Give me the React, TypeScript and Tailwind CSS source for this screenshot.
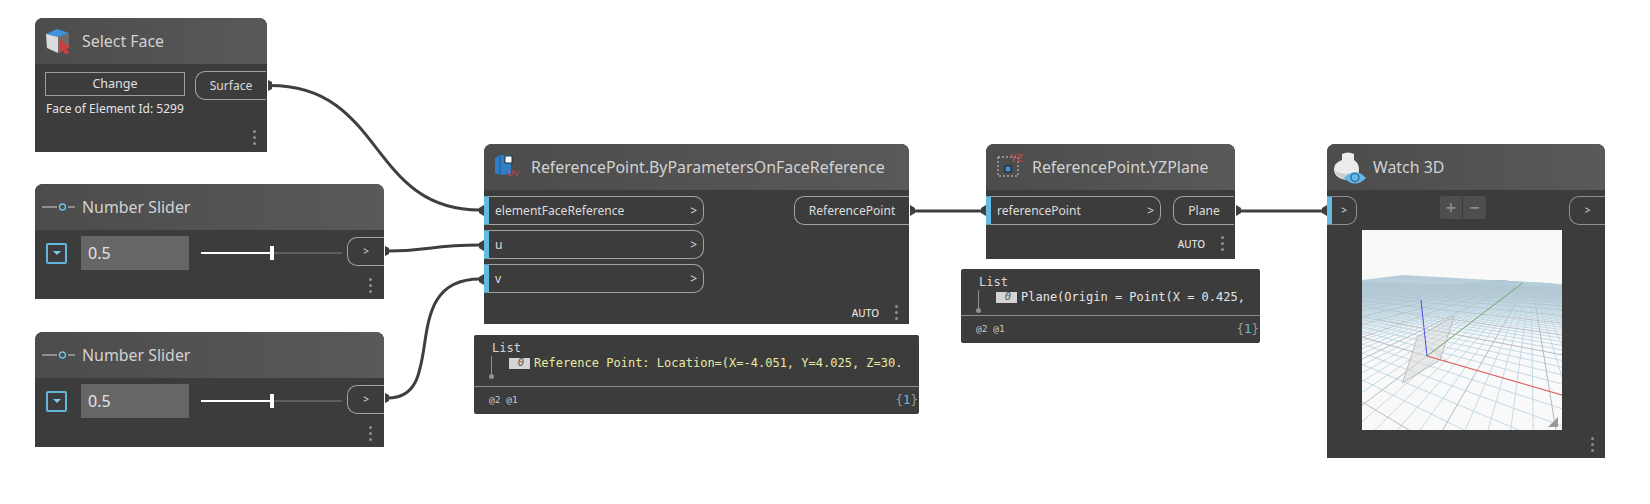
import type { ReactNode } from "react";

const ui = "font-['Noto_Sans','Open_Sans',sans-serif]";
const mono = "font-['DejaVu_Sans_Mono','Liberation_Mono',monospace]";

// ground grid of the Watch 3D preview, projected by hand
const vpX = [-208, 47];
const vpY = [169, 47];
const origin = [65, 126];
const p = -0.031;
const q = 0.075;

function project(x: number, y: number) {
  const d = 1 + x * p + y * q;
  return [
    (origin[0] + x * p * vpX[0] + y * q * vpY[0]) / d,
    (origin[1] + x * p * vpX[1] + y * q * vpY[1]) / d,
  ];
}

function gridLines() {
  const lines: { k: string; a: number[]; b: number[]; major: boolean }[] = [];
  for (let i = -60; i <= 30; i++) {
    const start = (0.03 - 1 - i * p) / q;
    lines.push({ k: `x${i}`, a: project(i, start), b: project(i, 800), major: i % 5 === 0 });
  }
  for (let i = -13; i <= 100; i++) {
    const end = (1 + i * q - 0.03) / -p;
    lines.push({ k: `y${i}`, a: project(end, i), b: project(-800, i), major: i % 5 === 0 });
  }
  return lines;
}

function Dots({ className = "" }: { className?: string }) {
  return (
    <div className={`flex flex-col gap-[3px] ${className}`}>
      <span className="h-[3px] w-[3px] rounded-full bg-[#8f8f8f]" />
      <span className="h-[3px] w-[3px] rounded-full bg-[#8f8f8f]" />
      <span className="h-[3px] w-[3px] rounded-full bg-[#8f8f8f]" />
    </div>
  );
}

function Node({
  className,
  title,
  icon,
  children,
}: {
  className: string;
  title: string;
  icon: ReactNode;
  children: ReactNode;
}) {
  return (
    <div className={`absolute flex flex-col bg-[#3c3c3c] rounded-t-[8px] ${className}`}>
      <div className="flex h-[46px] shrink-0 items-center rounded-t-[8px] bg-gradient-to-r from-[#4c4c4c] to-[#595959]">
        {icon}
        <span className="pt-px text-[15.9px] leading-none text-[#d2d2d2] whitespace-nowrap">{title}</span>
      </div>
      {children}
    </div>
  );
}

function InPort({ label, className = "w-[220px]" }: { label: string; className?: string }) {
  return (
    <div className={`flex h-[29px] items-center justify-between rounded-r-[10px] border border-l-[5px] border-[#a3a3a3] border-l-[#62bbe0] pl-[6px] pr-[6px] text-[12.1px] text-[#dcdcdc] ${className}`}>
      <span className="pt-px leading-none">{label}</span>
      <span className="text-[12px] leading-none">&gt;</span>
    </div>
  );
}

function OutPort({ label, className = "" }: { label: string; className?: string }) {
  return (
    <div className={`flex h-[29px] items-center justify-center rounded-l-[10px] border border-r-0 border-[#a3a3a3] pt-px text-[12.1px] leading-none text-[#dcdcdc] ${className}`}>
      {label}
    </div>
  );
}

function SliderNode({ className }: { className: string }) {
  return (
    <Node
      className={className}
      title="Number Slider"
      icon={
        <svg width="34" height="12" viewBox="0 0 34 12" className="ml-[7px] mr-[6px] shrink-0">
          <path d="M0 6H15M26 6H33" stroke="#d0d0d0" strokeWidth="1" />
          <circle cx="20.5" cy="6" r="3" fill="none" stroke="#6ac0e7" strokeWidth="1.4" />
        </svg>
      }
    >
      <div className="flex h-[34px] mt-[6px] items-center">
        <div className="ml-[11px] flex h-[21px] w-[21px] items-center justify-center rounded-[2px] border-2 border-[#62b5dc]">
          <span className="h-0 w-0 border-x-[4px] border-t-[4px] border-x-transparent border-t-[#7ccbee]" />
        </div>
        <div className="ml-[14px] flex h-[34px] w-[108px] items-center bg-[#666666] pl-[7px] text-[16px] text-[#e4e4e4]">0.5</div>
        <div className="relative ml-[12px] h-[2px] w-[141px] bg-[#5f5f5f]">
          <div className="h-[2px] w-[71px] bg-white" />
          <div className="absolute left-[69px] top-[-6px] h-[14px] w-[4px] bg-white" />
        </div>
        <div className="ml-[5px] flex h-[29px] w-[37px] -translate-y-[2px] items-center justify-center rounded-l-[10px] border border-r-0 border-[#a3a3a3] text-[10px] text-[#dcdcdc]">&gt;</div>
      </div>
      <Dots className="ml-auto mr-[12px] mt-[8px]" />
    </Node>
  );
}

function Preview({
  className,
  text,
  textClass,
  top,
}: {
  className: string;
  text: string;
  textClass: string;
  top: string;
}) {
  return (
    <div className={`absolute flex flex-col rounded-[2px] bg-[#3c3c3c] ${mono} ${className}`}>
      <div className={`relative shrink-0 overflow-hidden border-b border-[#8c8c8c] ${top}`}>
        <div className="pl-[18px] pt-[6px] text-[12px] leading-[14px] text-[#d8d8d8]">List</div>
        <div className="absolute left-[17px] top-[21px] h-[20px] w-px bg-[#909090]" />
        <div className="absolute left-[15px] top-[39px] h-[5px] w-[5px] rounded-full bg-[#909090]" />
        <div className="flex items-center pl-[35px] pt-[1px] whitespace-nowrap">
          <span className="flex h-[11px] w-[21px] items-center justify-end bg-[#d4d4d4] pr-[6px] text-[10.5px] italic text-[#555555]">0</span>
          <span className={`ml-[4px] text-[12px] leading-[14px] ${textClass}`}>{text}</span>
        </div>
      </div>
      <div className="flex flex-1 items-center justify-between pl-[15px] pr-px text-[#c8c8c8]">
        <span className="text-[9.5px]">@2 @1</span>
        <span className="text-[12.5px] text-[#9a9a9a]">
          {"{"}
          <span className="text-[#62bbe0]">1</span>
          {"}"}
        </span>
      </div>
    </div>
  );
}

function Wires() {
  const wire = "#3f3f3f";
  return (
    <svg className="absolute inset-0" width="1650" height="504" viewBox="0 0 1650 504" fill="none">
      <g stroke={wire} strokeWidth="3">
        <path d="M270 85.5C385 85.5 368 210 480 210" />
        <path d="M388 251C430 251 430 245 480 245" />
        <path d="M388 398C450 398 395 279 480 279" />
        <path d="M912 211H982" />
        <path d="M1238 211H1323" />
      </g>
      <g fill={wire}>
        <path d="M268 80L272 82V89L268 91Z" />
        <path d="M385 246L389 248V254L385 256Z" />
        <path d="M484 205L479 208V213L484 216Z" />
        <path d="M484 240L479 243V248L484 251Z" />
        <path d="M484 274L479 277V282L484 285Z" />
        <path d="M910 205L915 208V213L910 216Z" />
        <path d="M986 205L981 208V213L986 216Z" />
        <path d="M1236 205L1241 208V213L1236 216Z" />
        <path d="M1327 205L1322 208V213L1327 216Z" />
        <path d="M385 393L389 395V401L385 403Z" />
      </g>
    </svg>
  );
}

function Scene() {
  return (
    <svg width="200" height="200" viewBox="0 0 200 200" className="block">
      <defs>
        <clipPath id="ground">
          <path d="M0 50L41 45L200 54V200H0Z" />
        </clipPath>
        <linearGradient id="haze" x1="0" y1="0" x2="0" y2="1">
          <stop offset="0" stopColor="#b2ccd9" stopOpacity="1" />
          <stop offset="0.2" stopColor="#b2ccd9" stopOpacity="0.8" />
          <stop offset="0.5" stopColor="#bcd5e1" stopOpacity="0.4" />
          <stop offset="1" stopColor="#c4dbe6" stopOpacity="0" />
        </linearGradient>
      </defs>
      <rect width="200" height="200" fill="#f9f9f9" />
      <g clipPath="url(#ground)">
        {gridLines()
          .filter((l) => !l.major)
          .map((l) => (
            <line key={l.k} x1={l.a[0]} y1={l.a[1]} x2={l.b[0]} y2={l.b[1]} stroke="#bcd6e3" strokeWidth="0.9" />
          ))}
        {gridLines()
          .filter((l) => l.major)
          .map((l) => (
            <line key={l.k} x1={l.a[0]} y1={l.a[1]} x2={l.b[0]} y2={l.b[1]} stroke="#aeb4b8" strokeWidth="0.9" />
          ))}
        <rect x="0" y="45" width="200" height="65" fill="url(#haze)" />
      </g>
      <path d="M92.3 86L55.3 107L40.7 152.7L78 130Z" fill="#d8d8d8" fillOpacity="0.5" stroke="#bdbdbd" strokeWidth="1" />
      <path d="M65 126L86 132M68 118L86 132" stroke="#c4c4c4" strokeWidth="0.8" />
      <path d="M65 126L161 52.7" stroke="#6fae6f" strokeWidth="1" />
      <path d="M65 126L200 165" stroke="#f05a5a" strokeWidth="1" />
      <path d="M65 126L59 70" stroke="#4a4ae8" strokeWidth="1" />
      <path d="M186 197L196 187V197Z" fill="#9a9a9a" />
    </svg>
  );
}

export default function App() {
  return (
    <div className={`relative h-[504px] w-[1650px] overflow-hidden bg-white ${ui}`}>
      <Wires />

      {/* Select Face */}
      <Node
        className="left-[35px] top-[18px] h-[134px] w-[232px]"
        title="Select Face"
        icon={
          <svg width="26" height="26" viewBox="0 0 26 26" className="ml-[10px] mr-[11px] shrink-0">
            <path d="M1 6L12 1L24 5L13 9Z" fill="#3f94dc" />
            <path d="M1 6L13 9V25L2 20Z" fill="#dcdcdc" />
            <path d="M13 9L24 5V19L13 25Z" fill="#6e6e6e" />
            <path d="M15 11L26 20L21.5 20.5L24 25L20 26.5L18 22L15 25Z" fill="#c9413f" />
          </svg>
        }
      >
        <div className="flex pl-[10px] pt-[7px]">
          <div className="flex flex-col">
            <div className="mt-px flex h-[24px] w-[140px] items-center justify-center border border-[#9d9d9d] text-[12.5px] text-[#e0e0e0]">Change</div>
            <div className="mt-[5px] pl-px text-[12px] leading-[16px] whitespace-nowrap text-[#e4e4e4]">Face of Element Id: 5299</div>
          </div>
          <OutPort label="Surface" className="ml-[10px] w-[71px]" />
        </div>
        <Dots className="ml-auto mr-[11px] mt-[13px]" />
      </Node>

      <SliderNode className="left-[35px] top-[184px] h-[115px] w-[349px]" />
      <SliderNode className="left-[35px] top-[332px] h-[115px] w-[349px]" />

      {/* ReferencePoint.ByParametersOnFaceReference */}
      <Node
        className="left-[484px] top-[144px] h-[180px] w-[425px]"
        title="ReferencePoint.ByParametersOnFaceReference"
        icon={
          <svg width="26" height="26" viewBox="0 0 26 26" className="ml-[10px] mr-[11px] shrink-0">
            <path d="M1 4L6 1H17V20L6 21L1 19Z" fill="#2f7fc4" />
            <path d="M6 1V21" stroke="#1f5a8f" strokeWidth="1" />
            <rect x="11" y="2" width="7" height="7" fill="#fff" stroke="#2a2a2a" strokeWidth="1" />
            <text x="13" y="22" fontSize="9" fill="#b84a4a" fontFamily="Liberation Sans">UV</text>
          </svg>
        }
      >
        <div className="flex justify-between pt-[6px]">
          <div className="flex flex-col gap-[5px]">
            <InPort label="elementFaceReference" />
            <InPort label="u" />
            <InPort label="v" />
          </div>
          <OutPort label="ReferencePoint" className="w-[115px]" />
        </div>
        <div className="mt-[12px] flex items-center justify-end pr-[11px]">
          <span className="text-[10px] font-medium leading-none text-[#e0e0e0]">AUTO</span>
          <Dots className="ml-[16px]" />
        </div>
      </Node>

      <Preview
        className="left-[474px] top-[335px] h-[79px] w-[445px]"
        top="h-[52px]"
        text="Reference Point: Location=(X=-4.051, Y=4.025, Z=30."
        textClass="text-[#e9e9a2]"
      />

      {/* ReferencePoint.YZPlane */}
      <Node
        className="left-[986px] top-[144px] h-[115px] w-[249px]"
        title="ReferencePoint.YZPlane"
        icon={
          <svg width="26" height="26" viewBox="0 0 26 26" className="ml-[11px] mr-[9px] shrink-0">
            <rect x="1" y="3" width="20" height="19" fill="none" stroke="#d0d0d0" strokeWidth="1" strokeDasharray="2 2" />
            <rect x="8" y="12" width="6" height="6" fill="#3f94dc" stroke="#1b1b1b" strokeWidth="1" />
            <text x="13" y="8" fontSize="10" fontWeight="700" fill="#b84a4a" fontFamily="Liberation Sans">YZ</text>
          </svg>
        }
      >
        <div className="flex justify-between pt-[6px]">
          <InPort label="referencePoint" className="w-[175px]" />
          <OutPort label="Plane" className="w-[61px] mr-px" />
        </div>
        <div className="mt-[11px] flex items-center justify-end pr-[11px]">
          <span className="text-[10px] font-medium leading-none text-[#e0e0e0]">AUTO</span>
          <Dots className="ml-[16px]" />
        </div>
      </Node>

      <Preview
        className="left-[961px] top-[269px] h-[74px] w-[299px]"
        top="h-[47px]"
        text="Plane(Origin = Point(X = 0.425,"
        textClass="text-[#e4e4e4]"
      />

      {/* Watch 3D */}
      <Node
        className="left-[1327px] top-[144px] h-[314px] w-[278px]"
        title="Watch 3D"
        icon={
          <svg width="34" height="38" viewBox="0 0 34 38" className="ml-[6px] mr-[6px] mt-[6px] shrink-0">
            <path d="M9 3Q15 0 21 3V9Q26 12 26 19Q26 28 15 29Q1 28 1 18Q1 12 9 9Z" fill="#ececec" />
            <path d="M2 20Q14 26 26 20Q25 28 15 29Q4 28 2 20Z" fill="#cfcfcf" />
            <path d="M11 27Q22 15 33 27Q22 38 11 27Z" fill="#63b8ea" />
            <circle cx="22" cy="26.5" r="4" fill="none" stroke="#2b5f80" strokeWidth="1.2" />
          </svg>
        }
      >
        <div className="flex justify-between pt-[6px]">
          <div className="flex h-[29px] w-[30px] items-center justify-center rounded-r-[10px] border border-l-[5px] border-[#8f8f8f] border-l-[#62bbe0] text-[10px] text-[#dcdcdc]">&gt;</div>
          <div className="flex h-[23px] w-[46px] rounded-[3px] bg-[#4e4e4e] text-[18px] font-semibold leading-[23px] text-[#8a8a8a]">
            <span className="w-[23px] border-r border-[#3c3c3c] text-center">+</span>
            <span className="w-[23px] text-center">−</span>
          </div>
          <div className="flex h-[29px] w-[36px] items-center justify-center rounded-l-[10px] border border-r-0 border-[#8f8f8f] text-[10px] text-[#dcdcdc]">&gt;</div>
        </div>
        <div className="ml-[35px] mt-[5px] w-[200px]">
          <Scene />
        </div>
        <Dots className="ml-auto mr-[11px] mt-[7px]" />
      </Node>
    </div>
  );
}
